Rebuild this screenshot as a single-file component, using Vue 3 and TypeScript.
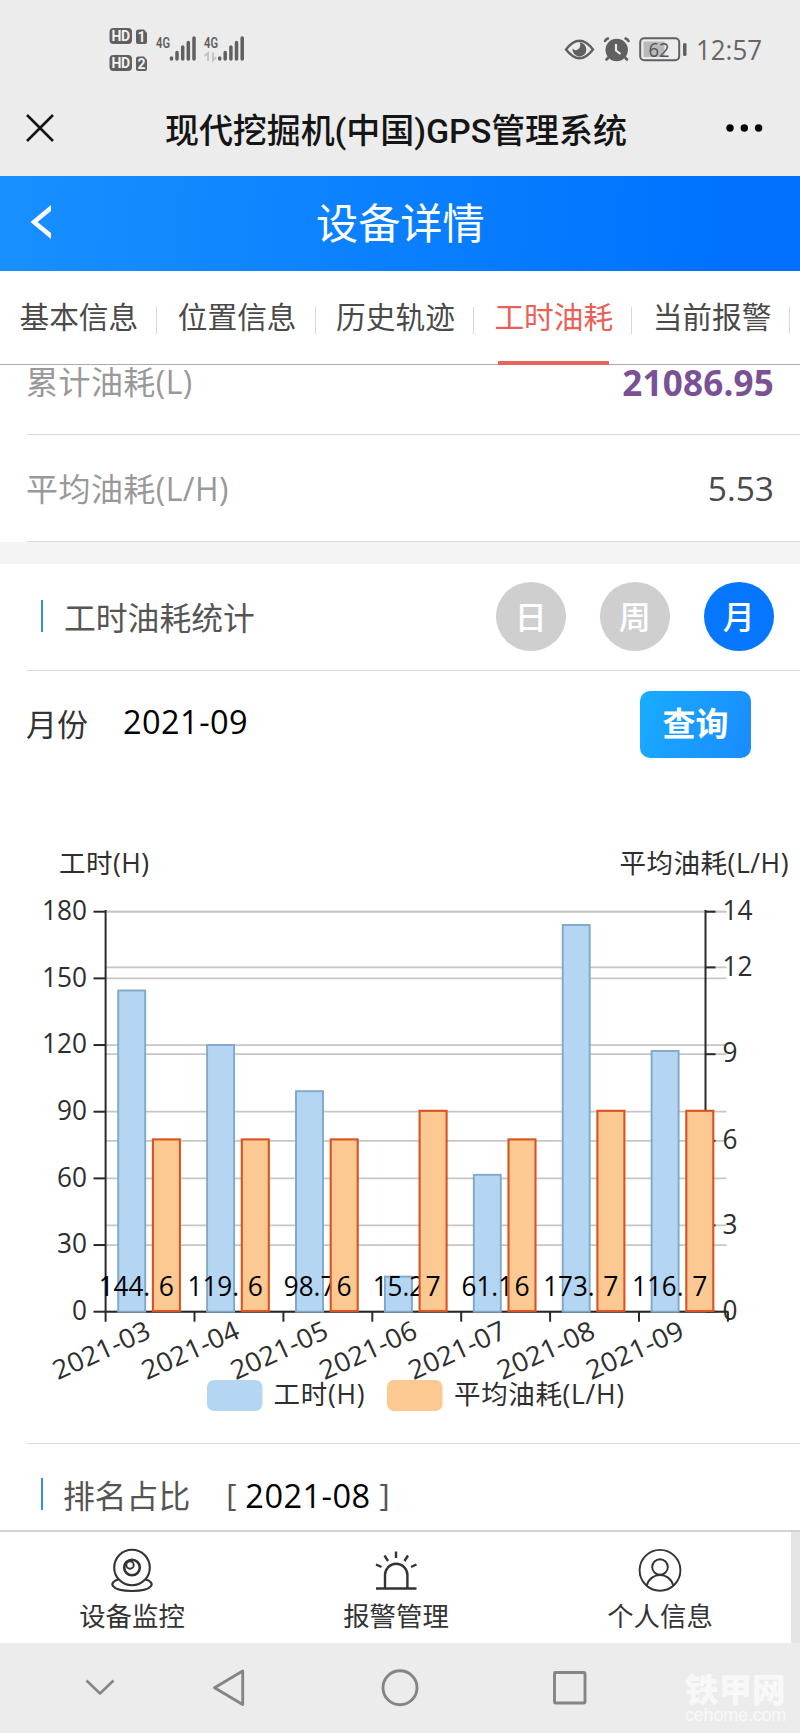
<script setup lang="ts">
interface Month {
  label: string
  hours: string
  top: number
  fuel: number
}

const tabs: string[] = ['基本信息', '位置信息', '历史轨迹', '工时油耗', '当前报警']
const activeTab = '工时油耗'
const periods: string[] = ['日', '周', '月']
const activePeriod = '月'

const months: Month[] = [
  { label: '2021-03', hours: '144.', top: 990.5, fuel: 6 },
  { label: '2021-04', hours: '119.', top: 1045, fuel: 6 },
  { label: '2021-05', hours: '98.7', top: 1091.2, fuel: 6 },
  { label: '2021-06', hours: '15.2', top: 1276.6, fuel: 7 },
  { label: '2021-07', hours: '61.1', top: 1174.8, fuel: 6 },
  { label: '2021-08', hours: '173.', top: 925, fuel: 7 },
  { label: '2021-09', hours: '116.', top: 1051, fuel: 7 },
]

const baseY = 1311.7
const step = 88.9
const leftTicks = [180, 150, 120, 90, 60, 30, 0].map((value, i) => ({ value, y: 911.7 + i * 66.67 }))
const rightTicks = [
  { value: 14, y: 911.7 },
  { value: 12, y: 967.4 },
  { value: 9, y: 1054.2 },
  { value: 6, y: 1140.8 },
  { value: 3, y: 1225.3 },
  { value: 0, y: 1311.7 },
]
const fuelTop = (v: number): number => (v === 7 ? 1110.8 : 1139.4)
// Three-digit values start further left of the bar than two-digit ones.
const hoursX = (m: Month, i: number): number => (m.hours.endsWith('.') ? 98.7 : 106) + i * step
</script>

<template>
  <div class="page">
    <header class="status">
      <svg class="signals" width="140" height="50" viewBox="108 24 140 50">
        <g fill="#606060">
          <rect x="109.5" y="28" width="22.5" height="16" rx="4" />
          <rect x="109.5" y="55" width="22.5" height="16" rx="4" />
          <path d="M138.500 29.500h5.500l3 3.500v9q0 2-2 2h-7q-2 0-2-2v-10.500q0-2 2.500-2z" />
          <path d="M138.500 56.500h5.500l3 3.500v9q0 2-2 2h-7q-2 0-2-2v-10.500q0-2 2.500-2z" />
        </g>
        <g class="badge">
          <text x="111.500" y="41" textLength="18.500">HD</text>
          <text x="111.500" y="68" textLength="18.500">HD</text>
          <text x="137.500" y="41.500">1</text>
          <text x="137.500" y="68.500">2</text>
        </g>
        <g class="net">
          <text x="156" y="47.500" textLength="14" lengthAdjust="spacingAndGlyphs">4G</text>
          <text x="204" y="47.500" textLength="14" lengthAdjust="spacingAndGlyphs">4G</text>
        </g>
        <g stroke="#606060" stroke-width="3.500" stroke-linecap="round">
          <path v-for="dx in [0, 48.200]" :key="dx" :transform="`translate(${dx} 0)`"
            d="M171.500 58v1M177 52.500v6.500M182.700 47v12M188.300 42.500v16.500M194 38v21" />
        </g>
        <path d="M204.500 56l3.500-3v8M213 52.500v8l3-3.500" fill="none" stroke="#c2c2c2" stroke-width="1.900" />
      </svg>
      <svg class="indicators" width="207" height="50" viewBox="560 24 207 50">
        <path d="M566 49.500Q579.500 32 593 49.500Q579.500 67 566 49.500z" fill="none" stroke="#606060" stroke-width="2.400" />
        <path d="M579.500 42.500a7 7 0 1 1-7 6q3 3 6 .5q3-3 1-6.500z" fill="#606060" />
        <g fill="none" stroke="#606060" stroke-width="2.600" stroke-linecap="round">
          <path d="M605 41q1-2 3-2.500M628.500 41q-1-2-3-2.500M608 58l-1.500 1.500M625.500 58l1.500 1.500" />
        </g>
        <circle cx="616.700" cy="50" r="11.200" fill="#606060" />
        <path d="M616 44v6.500l4.500 3.500" fill="none" stroke="#ececec" stroke-width="2.200" />
        <rect x="640.200" y="38.200" width="39" height="22" rx="4" fill="none" stroke="#606060" stroke-width="2" />
        <rect x="643.500" y="41.500" width="21" height="15.500" fill="#b9b9b9" />
        <text class="battery" x="648.500" y="56.500" textLength="21" lengthAdjust="spacingAndGlyphs">62</text>
        <rect x="683" y="43" width="3.500" height="13" rx="1.500" fill="#606060" />
        <text class="clock" x="696" y="60" textLength="66" lengthAdjust="spacingAndGlyphs">12:57</text>
      </svg>
    </header>

    <div class="titlebar">
      <svg width="30" height="30" viewBox="0 0 30 30">
        <path d="M2 2L28 28M28 2L2 28" stroke="#151515" stroke-width="2.600" />
      </svg>
      <h1>现代挖掘机(中国)GPS管理系统</h1>
      <svg class="dots" width="38" height="10" viewBox="0 0 38 10">
        <circle cx="5" cy="5" r="3.700" />
        <circle cx="19.300" cy="5" r="3.700" />
        <circle cx="33.600" cy="5" r="3.700" />
      </svg>
    </div>

    <div class="bluebar">
      <svg width="22" height="36" viewBox="0 0 22 36">
        <path d="M21 1L0.500 18L21 35V29L7.500 18L21 7z" fill="#fff" />
      </svg>
      <h2>设备详情</h2>
    </div>

    <nav class="tabs">
      <div v-for="t in tabs" :key="t" class="tab" :class="{ active: t === activeTab }">
        <span>{{ t }}</span>
      </div>
    </nav>

    <section class="rows">
      <div class="row first">
        <span>累计油耗(L)</span><strong>21086.95</strong>
      </div>
      <div class="row">
        <span>平均油耗(L/H)</span><em>5.53</em>
      </div>
    </section>
    <div class="gap"></div>

    <section class="stat-head">
      <i class="mark"></i>
      <span class="name">工时油耗统计</span>
      <div class="periods">
        <button v-for="p in periods" :key="p" :class="{ on: p === activePeriod }">{{ p }}</button>
      </div>
    </section>

    <section class="query">
      <label>月份</label>
      <span class="date">2021-09</span>
      <button>查询</button>
    </section>

    <svg class="chart" width="800" height="662" viewBox="0 781 800 662">
      <text class="t" x="59" y="873" textLength="90">工时(H)</text>
      <text class="t" x="619.500" y="873" textLength="169">平均油耗(L/H)</text>
      <g stroke="#c6c6c6" stroke-width="1.800">
        <path v-for="t in leftTicks" :key="'a' + t.value" :d="`M106 ${t.y}H726.500`" />
        <path v-for="t in rightTicks" :key="'b' + t.value" :d="`M106 ${t.y}H726.500`" />
      </g>
      <g stroke="#2a2a2a" stroke-width="2">
        <path :d="`M105.600 910V${baseY}M705.500 910V${baseY}M105.600 ${baseY}H728.500`" />
        <path v-for="t in leftTicks" :key="'c' + t.value" :d="`M93.500 ${t.y}H105.600`" />
        <path v-for="t in rightTicks" :key="'d' + t.value" :d="`M705.500 ${t.y}H715.500`" />
        <path v-for="i in 8" :key="'e' + i" :d="`M${105.6 + (i - 1) * step} ${baseY}v10`" />
      </g>
      <g class="t" text-anchor="end">
        <text v-for="t in leftTicks" :key="'f' + t.value" x="87" :y="t.y + 8.2"
          :textLength="String(t.value).length * 15" lengthAdjust="spacingAndGlyphs">{{ t.value }}</text>
      </g>
      <g class="t">
        <text v-for="t in rightTicks" :key="'g' + t.value" x="722.500" :y="t.y + 8.2"
          :textLength="String(t.value).length * 15" lengthAdjust="spacingAndGlyphs">{{ t.value }}</text>
      </g>
      <g fill="#b4d6f3" stroke="#7fa8ca" stroke-width="1.900">
        <rect v-for="(m, i) in months" :key="m.label" :x="118.200 + i * step" :y="m.top" width="27" :height="baseY - m.top" />
      </g>
      <g class="v">
        <text v-for="(m, i) in months" :key="m.label" :x="hoursX(m, i)" y="1295.700"
          textLength="51.500" lengthAdjust="spacingAndGlyphs">{{ m.hours }}</text>
      </g>
      <g fill="#fdc992" stroke="#d9521f" stroke-width="2.100">
        <rect v-for="(m, i) in months" :key="m.label" :x="152.900 + i * step" :y="fuelTop(m.fuel)" width="27" :height="baseY - 0.6 - fuelTop(m.fuel)" />
      </g>
      <g class="v" text-anchor="middle">
        <text v-for="(m, i) in months" :key="m.label" :x="166.400 + i * step" y="1295.700">{{ m.fuel }}</text>
      </g>
      <g class="t">
        <text v-for="(m, i) in months" :key="m.label" text-anchor="end" textLength="104" lengthAdjust="spacingAndGlyphs"
          :transform="`translate(${152.5 + i * step} 1337.200) rotate(-24.500)`">{{ m.label }}</text>
      </g>
      <rect x="207" y="1380" width="55.500" height="31" rx="7" fill="#b4d6f3" />
      <text class="t" x="273.500" y="1404" textLength="91">工时(H)</text>
      <rect x="387" y="1380" width="55.500" height="31" rx="7" fill="#fdc992" />
      <text class="t" x="454" y="1404" textLength="170">平均油耗(L/H)</text>
    </svg>

    <section class="rank">
      <i class="mark"></i>
      <span class="name">排名占比</span>
      <span class="bracket">[</span><span class="date">2021-08</span><span class="bracket">]</span>
    </section>

    <footer class="bottom">
      <div class="item">
        <svg width="46" height="46" viewBox="109 1547 46 46">
          <g fill="none" stroke="#333" stroke-width="2.100">
            <path d="M118.500 1579.500C108 1582 110 1591 132 1591S156 1582 145.500 1579.500" />
            <circle cx="132" cy="1567.500" r="17.800" />
            <circle cx="132" cy="1567.500" r="7.800" stroke-width="2.600" />
            <circle cx="130" cy="1565" r="3.700" stroke-width="1.900" />
          </g>
        </svg>
        <span>设备监控</span>
      </div>
      <div class="item">
        <svg width="46" height="46" viewBox="373 1547 46 46">
          <path d="M376 1588.500H416.500M385 1588V1575a11.200 11.200 0 0 1 22.400 0V1588M396 1551.500v6.500M384.500 1555.500l3.500 5.500M376 1564.500l5.500 2.500M408 1555.500l-3.500 5.500M416.500 1564.500l-5.500 2.500" fill="none" stroke="#333" stroke-width="2.400" />
        </svg>
        <span>报警管理</span>
      </div>
      <div class="item">
        <svg width="46" height="46" viewBox="637 1547 46 46">
          <g fill="none" stroke="#333" stroke-width="1.900">
            <circle cx="660" cy="1570.300" r="20.400" />
            <circle cx="660" cy="1567" r="7.800" />
            <path d="M646.800 1585.500C650.500 1571.500 669.500 1571.500 673.200 1585.500" />
          </g>
        </svg>
        <span>个人信息</span>
      </div>
    </footer>

    <div class="sysnav">
      <svg width="520" height="60" viewBox="80 1658 520 60">
        <g fill="none" stroke="#858585" stroke-width="2.900" stroke-linejoin="round">
          <path d="M86.500 1680.500L100 1693.500L113.500 1680.500" stroke-width="2.500" />
          <path d="M214.500 1687.700L242.700 1671V1704.500z" />
          <circle cx="400" cy="1687.700" r="17" />
          <rect x="554.500" y="1672.500" width="30.500" height="30.500" rx="1" />
        </g>
      </svg>
      <div class="brand"><b>铁甲网</b><span>cehome.com</span></div>
    </div>
  </div>
</template>

<style>
body {
  background: #fff;
}
</style>

<style scoped>
.page {
  width: 800px;
  height: 1733px;
  overflow: hidden;
  background: #fff;
  color: #333;
  font-family: "Open Sans", "Noto Sans", "Noto Sans CJK SC", sans-serif;
  display: flex;
  flex-direction: column;
}
.page > * {
  flex: none;
  box-sizing: border-box;
}
h1,
h2 {
  margin: 0;
}
button {
  border: 0;
  padding: 0;
  font-family: inherit;
  color: #fff;
}
.status {
  height: 98px;
  background: #ececec;
  display: flex;
  justify-content: space-between;
  padding: 24px 33px 0 108px;
}
.badge {
  font: 700 14px Roboto, sans-serif;
  fill: #f2f2f2;
}
.net {
  font: 600 15.500px Roboto, sans-serif;
  fill: #606060;
}
.battery {
  font: 400 20px "Open Sans", sans-serif;
  fill: #555;
}
.clock {
  font: 400 26.500px "Open Sans", sans-serif;
  fill: #666;
}
.titlebar {
  height: 78px;
  background: #ececec;
  display: flex;
  align-items: center;
  padding: 0 37px 18px 25px;
}
.titlebar h1 {
  flex: 1;
  margin: 5px 0 0 110px;
  font-family: Roboto, "Noto Sans CJK SC", sans-serif;
  font-size: 34px;
  line-height: 48px;
  font-weight: 500;
  letter-spacing: -0.080px;
  color: #151515;
  white-space: nowrap;
}
.bluebar {
  height: 95px;
  display: flex;
  align-items: center;
  padding: 0 0 4px 30px;
  background: linear-gradient(95deg, #1890ff 0%, #0072ff 90%);
  color: #fff;
}
.bluebar h2 {
  margin: 2px 0 0 264px;
  font-size: 42.200px;
  line-height: 60px;
  font-weight: 400;
}
.tabs {
  height: 94px;
  display: flex;
  border-bottom: 1px solid #aaa;
}
.tab {
  width: 158.300px;
  flex: none;
  height: 94px;
  position: relative;
  box-sizing: border-box;
  padding: 25px 0 0 19.500px;
  font-size: 29.700px;
  line-height: 42px;
  color: #4a4a4a;
  white-space: nowrap;
}
.tab::after {
  content: "";
  position: absolute;
  right: 1px;
  top: 36px;
  width: 1px;
  height: 27px;
  background: #d8d8d8;
}
.tab.active {
  color: #ea5f57;
}
.tab.active::before {
  content: "";
  position: absolute;
  left: 23px;
  bottom: 0;
  width: 111px;
  height: 4.500px;
  background: #e5645d;
}
.rows {
  padding-left: 27px;
}
.row {
  box-sizing: border-box;
  height: 107px;
  display: flex;
  justify-content: space-between;
  align-items: center;
  border-bottom: 1px solid #d9d9d9;
  padding-right: 26px;
  font-size: 32px;
  color: #999;
  white-space: nowrap;
}
.row span {
  margin: -3px 0 0 -1px;
  letter-spacing: 0.450px;
}
.row.first {
  height: 70px;
  padding-bottom: 34px;
}
.row.first span {
  margin-top: -5px;
}
.row strong {
  font-size: 35px;
  font-weight: 700;
  line-height: 36px;
  letter-spacing: 0.200px;
  color: #7b5196;
}
.row em {
  font-style: normal;
  font-size: 33.500px;
  color: #4a4a4a;
}
.gap {
  height: 22px;
  background: #f4f4f4;
}
.mark {
  width: 2px;
  height: 32px;
  background: #3a8fd0;
}
.stat-head {
  height: 107px;
  margin-left: 27px;
  border-bottom: 1px solid #d9d9d9;
  display: flex;
  align-items: center;
  padding: 0 26px 2px 14px;
}
.name {
  margin: -1px 0 0 21px;
  font-size: 31.800px;
  color: #555;
}
.periods {
  margin-left: auto;
  display: flex;
  gap: 33.500px;
}
.periods button {
  width: 70.500px;
  height: 69px;
  border-radius: 50%;
  background: #cfcfcf;
  font-size: 32px;
  font-weight: 500;
  padding-bottom: 3px;
}
.periods .on {
  background: #0577ff;
}
.query {
  height: 110px;
  display: flex;
  align-items: center;
  padding: 0 49px 4px 26px;
}
.query label {
  font-size: 31px;
  margin-top: -4px;
}
.date {
  font-size: 32.500px;
  color: #000;
  letter-spacing: 0.450px;
}
.query .date {
  margin: -5px 0 0 35px;
}
.query button {
  margin-left: auto;
  width: 111px;
  height: 67px;
  border-radius: 10px;
  background: linear-gradient(110deg, #19acff, #1a8bff);
  font-size: 33px;
  font-weight: 700;
  padding-bottom: 4px;
}
.chart {
  display: block;
}
.t {
  font-size: 26.500px;
  fill: #2e2e2e;
}
.v {
  font-size: 26.500px;
  fill: #000;
}
.rank {
  height: 87px;
  margin-left: 27px;
  border-top: 1px solid #d9d9d9;
  display: flex;
  align-items: center;
  padding: 15px 0 0 14px;
}
.rank .mark {
  margin-bottom: 2px;
}
.rank .name {
  margin-left: 20px;
}
.rank .date {
  margin-top: 1px;
}
.bracket {
  font-size: 31px;
  color: #555;
  line-height: 40px;
}
.name + .bracket {
  margin: -2px 0 0 36px;
}
.bracket + .date {
  margin-left: 9px;
}
.date + .bracket {
  margin: -2px 0 0 9px;
}
.bottom {
  height: 113px;
  display: flex;
  border-top: 2px solid #d2d2d2;
  background: linear-gradient(#fff, #fff) 0 0 / 791px 100% no-repeat #e5e5e5;
}
.item {
  width: 264px;
  display: flex;
  flex-direction: column;
  align-items: center;
  padding-top: 15px;
  font-size: 26.400px;
  line-height: 38px;
  color: #333;
}
.item span {
  margin-top: 4px;
}
.sysnav {
  height: 90px;
  background: #ececec;
  display: flex;
  padding: 15px 0 0 80px;
}
.brand {
  margin: 14px 0 0 85px;
  width: 101px;
  display: flex;
  flex-direction: column;
  color: #f8f8f8;
  white-space: nowrap;
}
.brand b {
  font-size: 33.500px;
  line-height: 34px;
  font-weight: 900;
}
.brand span {
  margin-top: 1px;
  font: 400 18px/16px "Liberation Sans", sans-serif;
  letter-spacing: -0.200px;
}
</style>
